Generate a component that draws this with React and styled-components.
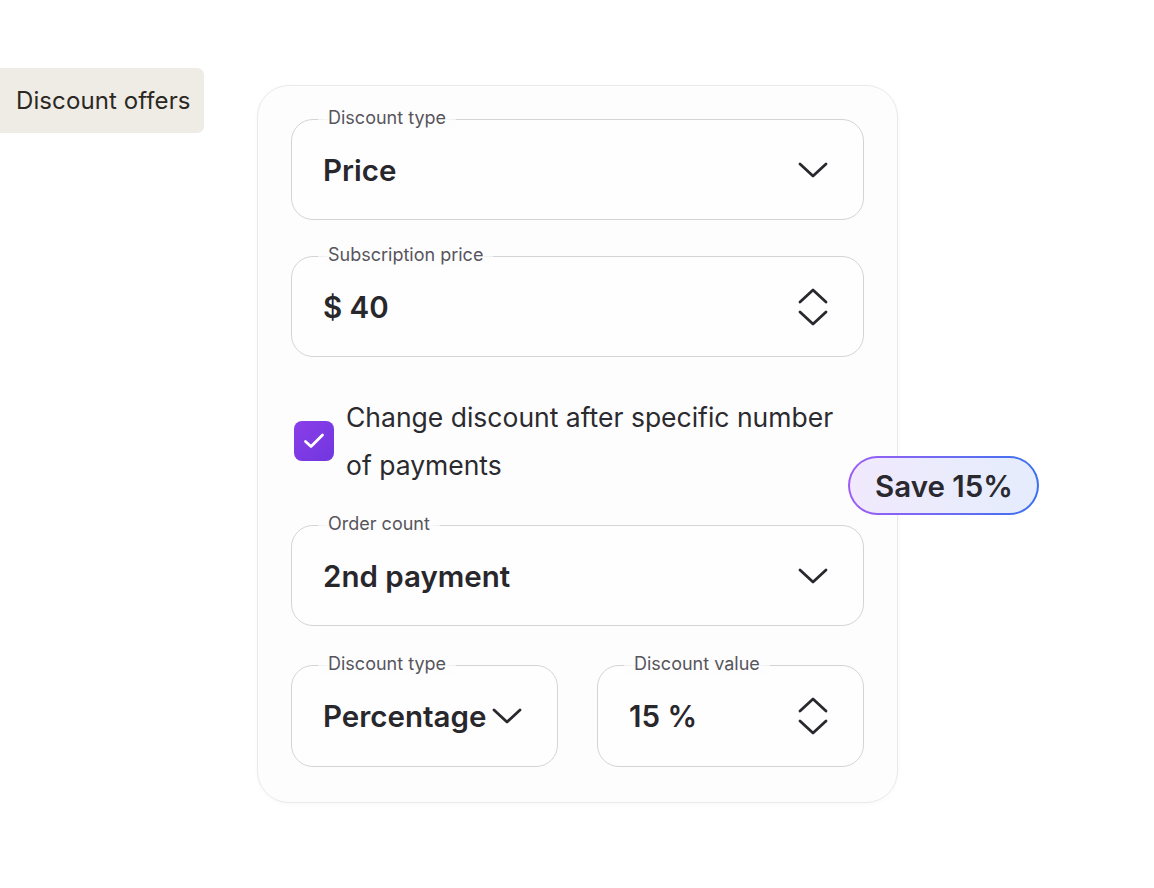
import React from 'react';
import styled, { createGlobalStyle } from 'styled-components';

const GlobalStyle = createGlobalStyle`
  body {
    margin: 0;
    background: #ffffff;
    font-family: Inter, "Noto Sans", sans-serif;
    color: #29282d;
  }
`;

const Page = styled.div`
  display: flex;
  align-items: flex-start;
  gap: 53px;
  padding-top: 68px;
  width: 1154px;
  height: 888px;
  box-sizing: border-box;
`;

const Chip = styled.div`
  width: 204px;
  height: 65px;
  box-sizing: border-box;
  padding-left: 16px;
  display: flex;
  align-items: center;
  background: #efece6;
  border-radius: 0 7px 7px 0;
  font-size: 24px;
  letter-spacing: 0.1px;
  color: #2b2824;
  white-space: nowrap;
`;

const Card = styled.div`
  position: relative;
  margin-top: 17px;
  width: 641px;
  box-sizing: border-box;
  padding: 33px 33px 35px 33px;
  background: #fefdfe;
  border: 1px solid #eaeaeb;
  border-radius: 32px;
  box-shadow: 0 1px 5px rgba(0, 0, 0, 0.03);
  display: flex;
  flex-direction: column;
  gap: 36px;
`;

const Field = styled.div`
  position: relative;
  height: ${(p) => (p.tall ? 102 : 101)}px;
  box-sizing: border-box;
  padding: 0 35px 0 31px;
  border: 1.5px solid #d4d3d7;
  border-radius: 22px;
  background: #fffeff;
  display: flex;
  align-items: center;
  justify-content: space-between;
  gap: 4px;
`;

const Label = styled.span`
  position: absolute;
  top: -13px;
  left: 26px;
  padding: 0 10px;
  font-size: 18px;
  line-height: 22px;
  color: #57555c;
  background: linear-gradient(to right, rgba(254, 253, 254, 0.6), #fefdfe 12%, #fefdfe 88%, rgba(254, 253, 254, 0.6));
`;

const Value = styled.span`
  font-size: 29.5px;
  font-weight: 600;
  color: #28272c;
  white-space: nowrap;
`;

const CheckRow = styled.div`
  display: flex;
  align-items: center;
  gap: 12px;
  padding-left: 3px;
`;

const Box = styled.div`
  flex: none;
  width: 40px;
  height: 40px;
  border-radius: 8px;
  background: linear-gradient(135deg, #8a3ee9, #7136df);
  display: flex;
  align-items: center;
  justify-content: center;
`;

const CheckText = styled.div`
  font-size: 26.5px;
  line-height: 48px;
  color: #2b2a2f;
  white-space: nowrap;
`;

const Split = styled.div`
  display: grid;
  grid-template-columns: 1fr 1fr;
  gap: 39px;
  margin-top: 3px;
`;

const Badge = styled.div`
  position: absolute;
  top: 370px;
  left: 590px;
  padding: 2px;
  border-radius: 30px;
  background: linear-gradient(90deg, #9d5cf5, #6a6cf2 55%, #3a70f0);
`;

const BadgeInner = styled.div`
  height: 55px;
  padding: 0 24px 0 25px;
  border-radius: 28px;
  background: linear-gradient(90deg, #f1e9fd, #e9ecfc 60%, #e5ecfd);
  display: flex;
  align-items: center;
  font-size: 29.5px;
  font-weight: 600;
  color: #2a2930;
  white-space: nowrap;
`;

const Chevron = () => (
  <svg width="30" height="16" viewBox="0 0 30 16" fill="none" style={{ flex: 'none' }}>
    <path d="M2 2 L15 14 L28 2" stroke="#29282d" strokeWidth="2.8" strokeLinecap="round" strokeLinejoin="round" />
  </svg>
);

const Stepper = () => (
  <svg width="30" height="38" viewBox="0 0 30 38" fill="none" style={{ flex: 'none' }}>
    <path d="M2 14 L15 2 L28 14" stroke="#29282d" strokeWidth="2.8" strokeLinecap="round" strokeLinejoin="round" />
    <path d="M2 24 L15 36 L28 24" stroke="#29282d" strokeWidth="2.8" strokeLinecap="round" strokeLinejoin="round" />
  </svg>
);

const Tick = () => (
  <svg width="22" height="18" viewBox="0 0 22 18" fill="none">
    <path d="M2.5 9.5 L8 14.5 L19.5 3" stroke="#ffffff" strokeWidth="2.8" strokeLinecap="round" strokeLinejoin="round" />
  </svg>
);

const InputField = ({ label, value, icon, tall }) => (
  <Field tall={tall}>
    <Label>{label}</Label>
    <Value>{value}</Value>
    {icon === 'stepper' ? <Stepper /> : <Chevron />}
  </Field>
);

export default function App() {
  return (
    <>
      <GlobalStyle />
      <Page>
        <Chip>Discount offers</Chip>
        <Card>
          <InputField label="Discount type" value="Price" />
          <InputField label="Subscription price" value="$ 40" icon="stepper" />
          <CheckRow>
            <Box><Tick /></Box>
            <CheckText>
              Change discount after specific number
              <br />
              of payments
            </CheckText>
          </CheckRow>
          <InputField label="Order count" value="2nd payment" />
          <Split>
            <InputField label="Discount type" value="Percentage" tall />
            <InputField label="Discount value" value="15 %" icon="stepper" tall />
          </Split>
          <Badge>
            <BadgeInner>Save 15%</BadgeInner>
          </Badge>
        </Card>
      </Page>
    </>
  );
}
